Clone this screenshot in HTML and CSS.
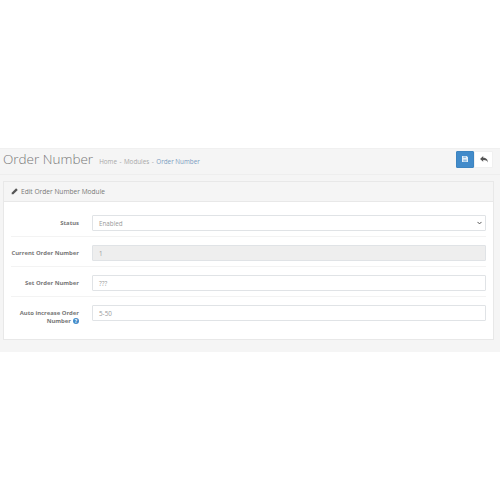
FILE: index.html
```html
<!DOCTYPE html>
<html>
<head>
  <title>Order Number</title>
  <link rel="stylesheet" href="styles.css">
</head>
<body>
  <div class="page">
    <div class="page-header">
      <h1>Order Number</h1>
      <ul class="breadcrumb">
        <li>Home</li>
        <li>Modules</li>
        <li class="current">Order Number</li>
      </ul>
      <div class="buttons">
        <a class="btn btn-primary">
          <svg width="6" height="6" viewBox="0 0 7 7"><path d="M0 0h5.5L7 1.5V7H0z" fill="#e4eff8"/><path d="M1.5 .6h3v1.7h-3zM1.5 4h4v2.4h-4z" fill="#8fbbe0"/></svg>
        </a>
        <a class="btn btn-default">
          <svg width="8" height="7" viewBox="0 0 9 8"><path d="M3.6 0v1.9C6.8 1.9 9 3.6 8.8 7.4 8 5.4 6.4 4.6 3.6 4.7v1.9L0 3.3z" fill="#555"/></svg>
        </a>
      </div>
    </div>
    <div class="panel">
      <div class="panel-heading">
        <svg width="7" height="7" viewBox="0 0 8 8"><path d="M5.8.3l1.9 1.9-5 5H.8V5.3z" fill="#555"/></svg>
        Edit Order Number Module
      </div>
      <form class="panel-body">
        <div class="form-row">
          <label>Status</label>
          <div class="control select">Enabled
            <svg width="5" height="4" viewBox="0 0 6 4"><path d="M.6.7L3 3.1 5.4.7" fill="none" stroke="#555" stroke-width="1.2"/></svg>
          </div>
        </div>
        <div class="form-row">
          <label>Current Order Number</label>
          <div class="control disabled">1</div>
        </div>
        <div class="form-row">
          <label>Set Order Number</label>
          <div class="control">???</div>
        </div>
        <div class="form-row">
          <label><span>Auto increase Order Number</span><span class="help">?</span></label>
          <div class="control">5-50</div>
        </div>
      </form>
    </div>
  </div>
</body>
</html>
```
FILE: styles.css
```css
html, body {
  margin: 0;
  background-color: #fff;
}

body {
  font-family: "Open Sans", sans-serif;
  font-size: 7px;
  color: #777;
}

.page {
  margin-top: 148px;
  height: 204px;
  background-color: #f5f5f5;
  border-top: 1px solid #f0f0f0;
  box-sizing: border-box;
}

.page-header {
  display: flex;
  align-items: center;
  height: 25px;
  padding: 0 7px 0 3px;
  border-bottom: 1px solid #eee;
}

h1 {
  margin: -5px 0 0;
  font-size: 13.5px;
  font-weight: 300;
  color: #777;
}

.breadcrumb {
  display: flex;
  margin: 0 0 0 6px;
  padding: 0;
  list-style: none;
  font-size: 6.3px;
  color: #a8a8a8;
}

.breadcrumb li + li::before {
  content: "-";
  padding: 0 2.5px;
}

.breadcrumb .current {
  color: #7a9cc0;
}

.breadcrumb .current::before {
  color: #a8a8a8;
}

.buttons {
  display: flex;
  margin-left: auto;
  margin-top: -5px;
}

.btn {
  display: flex;
  align-items: center;
  justify-content: center;
  height: 17px;
  box-sizing: border-box;
  border-radius: 1px;
}

.btn-primary {
  width: 18px;
  background-color: #428bca;
  border: 1px solid #3d84c0;
}

.btn-default {
  width: 19px;
  background-color: #fff;
  border: 1px solid #f0f0f0;
}

.panel {
  margin: 6px 6px 0 3px;
  background-color: #fff;
  border: 1px solid #e8e8e8;
}

.panel-heading {
  display: flex;
  align-items: center;
  gap: 3px;
  height: 19px;
  padding-left: 7px;
  background-color: #f5f5f5;
  border-bottom: 1px solid #e8e8e8;
  font-size: 6.6px;
  color: #777;
}

.panel-body {
  padding: 5px 7px 14px;
}

.form-row {
  display: flex;
  align-items: flex-start;
  gap: 13px;
  padding: 8px 0 5px;
  border-bottom: 1px solid #f3f3f3;
}

.form-row:last-child {
  border-bottom: none;
  padding-bottom: 0;
}

label {
  flex: 0 0 68px;
  box-sizing: border-box;
  padding-top: 4px;
  text-align: right;
  font-size: 5.9px;
  line-height: 8px;
  font-weight: 700;
  color: #777;
}

.help {
  display: inline-block;
  width: 6px;
  height: 6px;
  margin-left: 2px;
  border-radius: 50%;
  background-color: #428bca;
  color: #fff;
  font-size: 5px;
  line-height: 6px;
  text-align: center;
}

.control {
  flex: 1;
  display: flex;
  align-items: center;
  justify-content: space-between;
  height: 16px;
  padding: 0 3px 0 6px;
  box-sizing: border-box;
  background-color: #fff;
  border: 1px solid #e0e3e6;
  border-radius: 1px;
  font-size: 6.3px;
  color: #999;
}

.control.disabled {
  background-color: #eee;
}
```
